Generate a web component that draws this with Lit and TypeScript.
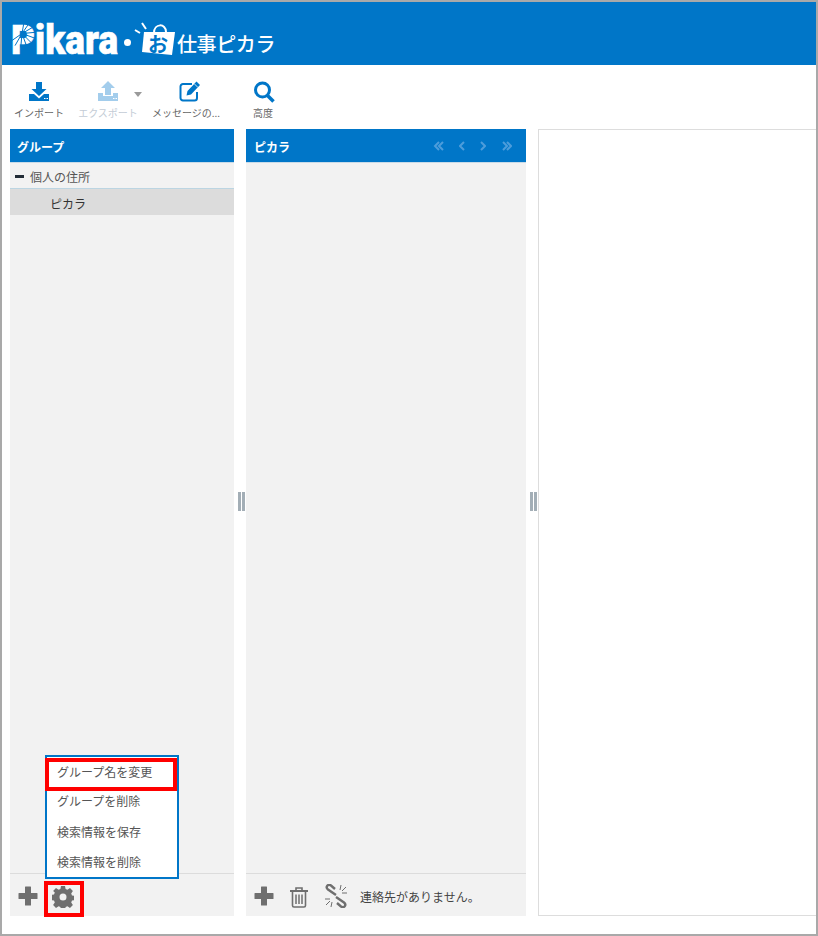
import { LitElement, html, css, svg } from "lit";
import { customElement } from "lit/decorators.js";

const plus = html`<svg class="plus" width="20" height="20" viewBox="0 0 20 20"><path d="M7.500 0.500h5a.5.5 0 0 1 .5.500V7h6a.5.5 0 0 1 .5.500v5a.5.5 0 0 1-.5.500h-6v6a.5.5 0 0 1-.5.500h-5a.5.5 0 0 1-.5-.500v-6H1a.5.5 0 0 1-.5-.500v-5A.5.5 0 0 1 1 7h6V1a.5.5 0 0 1 .5-.500z" fill="#6f6f6f"/></svg>`;

@customElement("app-root")
export class AppRoot extends LitElement {
  static styles = css`
    :host { display: block; width: 818px; height: 936px; font-family: "Noto Sans CJK JP", "Liberation Sans", sans-serif; }
    .frame { box-sizing: border-box; width: 818px; height: 936px; border: 2px solid #a9a9a9; background: #fff; display: flex; flex-direction: column; position: relative; overflow: hidden; }
    .brand { height: 63px; flex: none; background: #0076c8; display: flex; align-items: flex-end; padding: 0 0 7px 9px; box-sizing: border-box; color: #fff; position: relative; }
    .pikara { font: 900 41px/34px Roboto, sans-serif; -webkit-text-stroke: 0.6px #fff; width: 109px; margin-bottom: 1px; white-space: nowrap; position: relative; flex: none; }
    .word { display: inline-block; transform: scaleX(.9); transform-origin: left center; }
    .burst { position: absolute; left: 0; top: 0; }
    .dot { width: 7px; height: 7px; background: #fff; border-radius: 50%; margin: 0 0 12px 4px; flex: none; }
    .bag { margin-left: 2px; flex: none; display: block; }
    .shigoto { font-size: 20px; line-height: 28px; font-weight: 500; letter-spacing: -0.4px; white-space: nowrap; }
    .toolbar { height: 64px; flex: none; display: flex; align-items: flex-start; padding-left: 8px; box-sizing: border-box; }
    .tool { display: flex; flex-direction: column; align-items: center; width: 58px; padding-top: 14px; height: 64px; box-sizing: border-box; font-size: 10px; line-height: 14px; color: #666; white-space: nowrap; position: relative; }
    .tool svg { display: block; height: 24px; margin-bottom: 3px; }
    .tool.off { color: #c3ccd6; width: 72px; margin-left: 4px; }
    .tool.msg { width: 70px; margin-left: 7px; }
    .tool.msg svg { margin-left: 8px; }
    .tool.adv { width: 40px; margin-left: 22px; }
    .tool.adv svg { margin-left: 2px; transform: translateY(1px); }
    .caret { position: absolute; right: 2px; top: 27px; width: 0; height: 0; border: 4px solid transparent; border-top: 5px solid #9a9a9a; border-bottom: 0; }
    .columns { flex: 1; display: flex; padding: 0 0 18px 8px; min-height: 0; }
    .panel { background: #f2f2f2; display: flex; flex-direction: column; position: relative; }
    .left { width: 224px; }
    .mid { width: 280px; margin-left: 12px; }
    .right { flex: 1; margin-left: 12px; background: #fff; border: 1px solid #ddd; border-right: 0; }
    .phead { height: 33px; flex: none; background: #0076c8; color: #fff; font-size: 12px; font-weight: 700; line-height: 36px; padding-left: 7px; border-bottom: 1px solid #c9dbe8; display: flex; justify-content: space-between; }
    .mid .phead { padding-left: 8px; }
    .pager { display: flex; align-items: center; gap: 15px; padding: 0 14px 0 0; height: 33px; }
    .tree { box-sizing: border-box; height: 26px; display: flex; align-items: center; font-size: 12px; color: #555; border-bottom: 1px solid #bcd5e2; padding: 2px 0 0 5px; flex: none; }
    .minus { width: 9px; height: 3px; background: #222c36; margin-right: 6px; }
    .sel { height: 26px; flex: none; background: #dcdcdc; font-size: 12px; color: #333; line-height: 29px; padding-left: 40px; }
    .spacer { flex: 1; }
    .foot { height: 43px; flex: none; border-top: 1px solid #dcdcdc; display: flex; align-items: center; box-sizing: border-box; padding-left: 8px; font-size: 12px; color: #444; }
    .foot svg { flex: none; display: block; }
    .foot .plus { margin-top: 2px; }
    .foot .raise { margin-top: 4px; }
    .foot .chain { margin-top: 2px; }
    .mid .foot { gap: 15px; }
    .mid .foot span { margin: 2px 0 0 -3px; }
    .foot .gear { margin: 4px 0 0 14px; }
    .menu { position: absolute; left: 35px; bottom: 37px; width: 134px; height: 124px; box-sizing: border-box; border: 2px solid #0076c8; background: #fff; font-size: 12px; color: #555; }
    .menu div { height: 30px; line-height: 20px; padding-left: 10px; white-space: nowrap; }
    .menu .first { box-sizing: border-box; height: 33px; margin: 1px 0 0 -2px; width: 132px; border: 4px solid #f00; line-height: 19px; padding-left: 8px; }
    .menu .row { line-height: 22px; }
    .redbox { position: absolute; left: 34px; bottom: -1px; width: 40px; height: 36px; box-sizing: border-box; border: 4px solid #f00; }
    .grip { position: absolute; top: 363px; right: -11px; width: 7px; height: 19px; display: flex; gap: 1px; }
    .grip i { width: 3px; background: #a3aeb6; }
  `;

  render() {
    const rays = [-80, -55, -30, -5, 20, 45, 70, 95, 120, 145];
    return html`<div class="frame">
      <div class="brand">
        <span class="pikara"><span class="word">Pikara</span>
          <svg class="burst" width="24" height="34" viewBox="0 0 24 34">
            ${rays.map((a) => svg`<path d="M11 10.500L${11 + 14 * Math.cos((a * Math.PI) / 180)} ${10.5 + 14 * Math.sin((a * Math.PI) / 180)}" stroke="#0076c8" stroke-width="1"/>`)}
            <circle cx="11" cy="10.500" r="1.500" fill="#0076c8"/>
          </svg>
        </span>
        <span class="dot"></span>
        <svg class="bag" width="44" height="36" viewBox="0 0 44 36">
          <path d="M2 8l5 3M9 1l4 6" stroke="#fff" stroke-width="2" fill="none"/>
          <path d="M11 10l31 0-3 23-30-3z" fill="#fff"/>
          <path d="M21 11c0-10 12-10 12-1" fill="none" stroke="#fff" stroke-width="2"/>
          <text x="25" y="30" font-size="20" font-weight="700" text-anchor="middle" fill="#0076c8" font-family="Noto Sans CJK JP">お</text>
        </svg>
        <span class="shigoto">仕事ピカラ</span>
      </div>
      <div class="toolbar">
        <div class="tool">
          <svg width="20" viewBox="0 0 20 24"><path d="M7 3h6v7h4.500L10 17 2.500 10H7z" fill="#0076c8"/><path d="M0 15h5l5 4.500L15 15h5v7H0z" fill="#0076c8"/><path d="M15 19.500h1.500M17.500 19.500H19" stroke="#fff"/></svg>
          インポート
        </div>
        <div class="tool off">
          <svg width="20" viewBox="0 0 20 24"><path d="M10 2l7 7h-4v7H7V9H3z" fill="#a3cdec"/><path d="M0 14h5v3h10v-3h5v8H0z" fill="#a3cdec"/><path d="M15 19.500h1.500M17.500 19.500H19" stroke="#fff"/></svg>
          エクスポート
          <span class="caret"></span>
        </div>
        <div class="tool msg">
          <svg width="22" viewBox="0 0 22 24"><path d="M13 5H4a2.500 2.500 0 0 0-2.500 2.500V19A2.500 2.500 0 0 0 4 21.500h11.500A2.500 2.500 0 0 0 18 19v-6" fill="none" stroke="#0076c8" stroke-width="2"/><path d="M17.500 2.500l3.500 3.500-9 9.500-4.500 1 1-4.500z" fill="#0076c8"/><path d="M15.500 5l3.500 3.500" stroke="#fff" stroke-width=".8"/></svg>
          メッセージの...
        </div>
        <div class="tool adv">
          <svg width="22" viewBox="0 0 22 24"><circle cx="9.500" cy="10" r="7" fill="none" stroke="#0076c8" stroke-width="3"/><path d="M14.500 15.500l6 6" stroke="#0076c8" stroke-width="3.600"/></svg>
          高度
        </div>
      </div>
      <div class="columns">
        <section class="panel left">
          <div class="phead">グループ</div>
          <div class="tree"><span class="minus"></span>個人の住所</div>
          <div class="sel">ピカラ</div>
          <div class="spacer"></div>
          <div class="foot">
            ${plus}
            <svg class="gear" width="22" height="22" viewBox="0 0 22 22"><path fill="#6f6f6f" fill-rule="evenodd" d="M9 0h4l.6 3 1.800.8 2.600-1.700 2.900 2.900-1.700 2.600.8 1.800 3 .6v4l-3 .6-.8 1.800 1.700 2.600-2.900 2.900-2.600-1.700-1.800.8-.6 3H9l-.6-3-1.800-.8-2.600 1.700-2.900-2.900 1.700-2.600-.8-1.800-3-.6V9l3-.6.8-1.800L1.100 5l2.900-2.900 2.600 1.700 1.800-.8zM11 7.500a3.500 3.500 0 1 0 0 7 3.500 3.500 0 0 0 0-7z"/></svg>
          </div>
          <div class="menu">
            <div class="first">グループ名を変更</div>
            <div>グループを削除</div>
            <div class="row">検索情報を保存</div>
            <div class="row">検索情報を削除</div>
          </div>
          <div class="redbox"></div>
          <div class="grip"><i></i><i></i></div>
        </section>
        <section class="panel mid">
          <div class="phead">ピカラ
            <span class="pager">
              ${["M6 1L2 5l4 4M10 1L6 5l4 4", "M5 1L1 5l4 4", "M1 1l4 4-4 4", "M2 1l4 4-4 4M6 1l4 4-4 4"].map(
                (d, i) => {
                  const w = i === 0 || i === 3 ? 11 : 6;
                  return html`<svg width="${w}" height="10" viewBox="0 0 ${w} 10">${svg`<path d=${d} fill="none" stroke="#4d9ddb" stroke-width="2"/>`}</svg>`;
                }
              )}
            </span>
          </div>
          <div class="spacer"></div>
          <div class="foot">
            ${plus}
            <svg class="raise" width="20" height="22" viewBox="0 0 20 22" fill="none" stroke="#6f6f6f"><path d="M1 5h18" stroke-width="2"/><path d="M7 4.500V2h6v2.500" stroke-width="1.600"/><path d="M3.500 5v14.500a1.500 1.500 0 0 0 1.500 1.500h10a1.500 1.500 0 0 0 1.500-1.500V5" stroke-width="1.600"/><path d="M7 8.500V18M10 8.500V18M13 8.500V18" stroke-width="1.500"/></svg>
            <svg class="chain" width="24" height="24" viewBox="0 0 24 24" fill="none" stroke="#6f6f6f"><path d="M12 11L4 5.500C1 3 4-.5 7 1.500L11 5" stroke-width="2.400"/><path d="M12 13l8 5.500c3 2.500 0 6-3 4L13 19" stroke-width="2.400"/><path d="M17 1l-1 5M22 3l-4 4M23 9h-5M1 15h5M2 21l4-4M7 23l1-5" stroke-width="1"/></svg>
            <span>連絡先がありません。</span>
          </div>
          <div class="grip"><i></i><i></i></div>
        </section>
        <section class="panel right"></section>
      </div>
    </div>`;
  }
}
